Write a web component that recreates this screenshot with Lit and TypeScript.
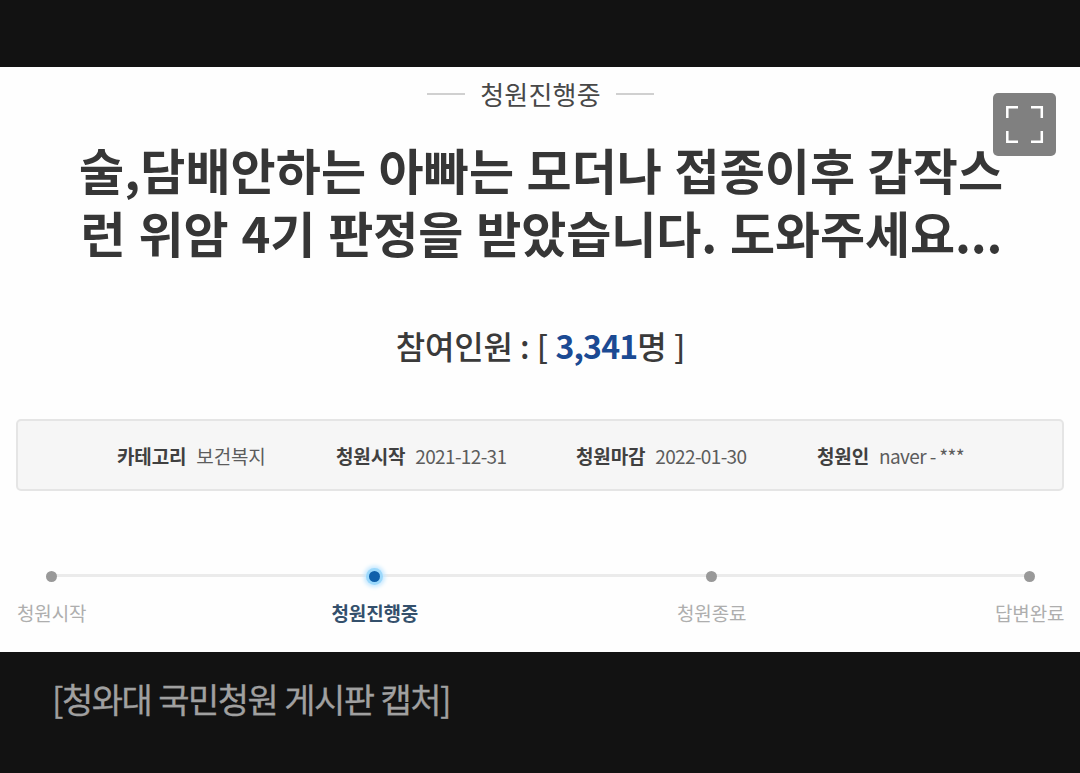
import { LitElement, css, html } from 'lit';
import { customElement } from 'lit/decorators.js';

const info = [
  { cls: 'text', label: '카테고리', value: '보건복지' },
  { cls: 'date', label: '청원시작', value: '2021-12-31' },
  { cls: 'date', label: '청원마감', value: '2022-01-30' },
  { cls: 'author', label: '청원인', value: 'naver - ***' },
];

@customElement('app-root')
export class AppRoot extends LitElement {
  static styles = css`
    :host {
      display: block;
      height: 773px;
      box-sizing: border-box;
      padding-top: 67px;
      overflow: hidden;
      background: #121212;
      font-family: 'Noto Sans CJK KR', sans-serif;
      white-space: nowrap;
    }

    .photo {
      position: relative;
      height: 585px;
      background: #fefefe;
      overflow: hidden;
    }

    .state {
      display: flex;
      justify-content: center;
      align-items: center;
      gap: 15px;
      height: 54px;
      padding-left: 1px;
      color: #484848;
      font-size: 26px;
      letter-spacing: 0.2px;
    }

    .state span {
      padding-bottom: 2px;
    }

    .state::before,
    .state::after {
      content: '';
      width: 38px;
      height: 2px;
      background: #d0d0d0;
    }

    .title {
      margin: 16px 0 0 79px;
      font-size: 49px;
      line-height: 63px;
      font-weight: 700;
      letter-spacing: 0.1px;
      word-spacing: 1.2px;
      color: #363636;
    }

    .title span {
      display: block;
      width: max-content;
    }

    .title span + span {
      margin-left: 1.5px;
      letter-spacing: -0.1px;
      word-spacing: 2px;
    }

    .count {
      margin-top: 60px;
      padding-left: 1px;
      text-align: center;
      font-size: 32px;
      line-height: 44px;
      font-weight: 500;
      letter-spacing: -0.25px;
      word-spacing: 0.5px;
      color: #3a3a3a;
    }

    .count b {
      letter-spacing: -0.8px;
      color: #1b4a93;
    }

    .info {
      display: grid;
      grid-template-columns: 219px 240px 241px 1fr;
      align-items: center;
      box-sizing: border-box;
      height: 72px;
      margin: 52px 16px 0;
      padding-left: 99px;
      border: 2px solid #e5e5e5;
      border-radius: 5px;
      background: #f6f6f6;
      font-size: 19px;
      letter-spacing: -0.15px;
      color: #5c5c5c;
    }

    .info b {
      margin-right: 10px;
      color: #404040;
    }

    .date span {
      letter-spacing: -0.65px;
    }

    .author span {
      letter-spacing: -0.6px;
    }

    .steps {
      display: grid;
      grid-template-columns: 315px 345px 318px 70px;
      margin: 70px 0 0 17px;
      background: linear-gradient(#ebebeb, #ebebeb) 35px 13px / 977px 3px no-repeat;
      font-size: 19px;
      letter-spacing: -0.15px;
      color: #aeaeae;
    }

    .step {
      display: flex;
      flex-direction: column;
      align-items: center;
      justify-self: start;
    }

    .dot {
      width: 11px;
      height: 11px;
      margin: 10px 0 17px;
      border-radius: 50%;
      background: #999;
    }

    .current {
      margin-left: -0.5px;
      font-weight: 700;
      color: #34506c;
    }

    .current .dot {
      background: #0f60ab;
      box-shadow: 0 0 0 3px #9bd8fb, 0 0 4px 5px #c0e6ff;
    }

    .expand {
      position: absolute;
      top: 26px;
      right: 24px;
      width: 63px;
      height: 63px;
      padding: 0;
      border: 0;
      border-radius: 5px;
      background: #808080;
    }

    .expand svg {
      display: block;
    }

    .caption {
      margin: 22px 0 0 52px;
      font-size: 34px;
      line-height: 50px;
      letter-spacing: -1.5px;
      word-spacing: 0.8px;
      color: #a0a0a0;
      -webkit-text-stroke: 0.3px #a0a0a0;
    }
  `;

  step(label: string, current = false) {
    return html`
      <div class="step ${current ? 'current' : ''}">
        <i class="dot"></i>
        <span>${label}</span>
      </div>
    `;
  }

  render() {
    return html`
      <div class="photo">
        <div class="state"><span>청원진행중</span></div>
        <div class="title">
          <span>술,담배안하는 아빠는 모더나 접종이후 갑작스</span>
          <span>런 위암 4기 판정을 받았습니다. 도와주세요...</span>
        </div>
        <div class="count">참여인원 : [ <b>3,341</b>명 ]</div>
        <div class="info">
          ${info.map((i) => html`<div class=${i.cls}><b>${i.label}</b><span>${i.value}</span></div>`)}
        </div>
        <div class="steps">
          ${this.step('청원시작')} ${this.step('청원진행중', true)}
          ${this.step('청원종료')} ${this.step('답변완료')}
        </div>
        <button class="expand" aria-label="확대">
          <svg width="63" height="63" fill="none" stroke="#fff" stroke-width="2.5">
            <path d="M14.3 25V14.3H25M38 14.3H48.8V25M48.8 38V48.8H38M25 48.8H14.3V38" />
          </svg>
        </button>
      </div>
      <div class="caption">[청와대 국민청원 게시판 캡처]</div>
    `;
  }
}
